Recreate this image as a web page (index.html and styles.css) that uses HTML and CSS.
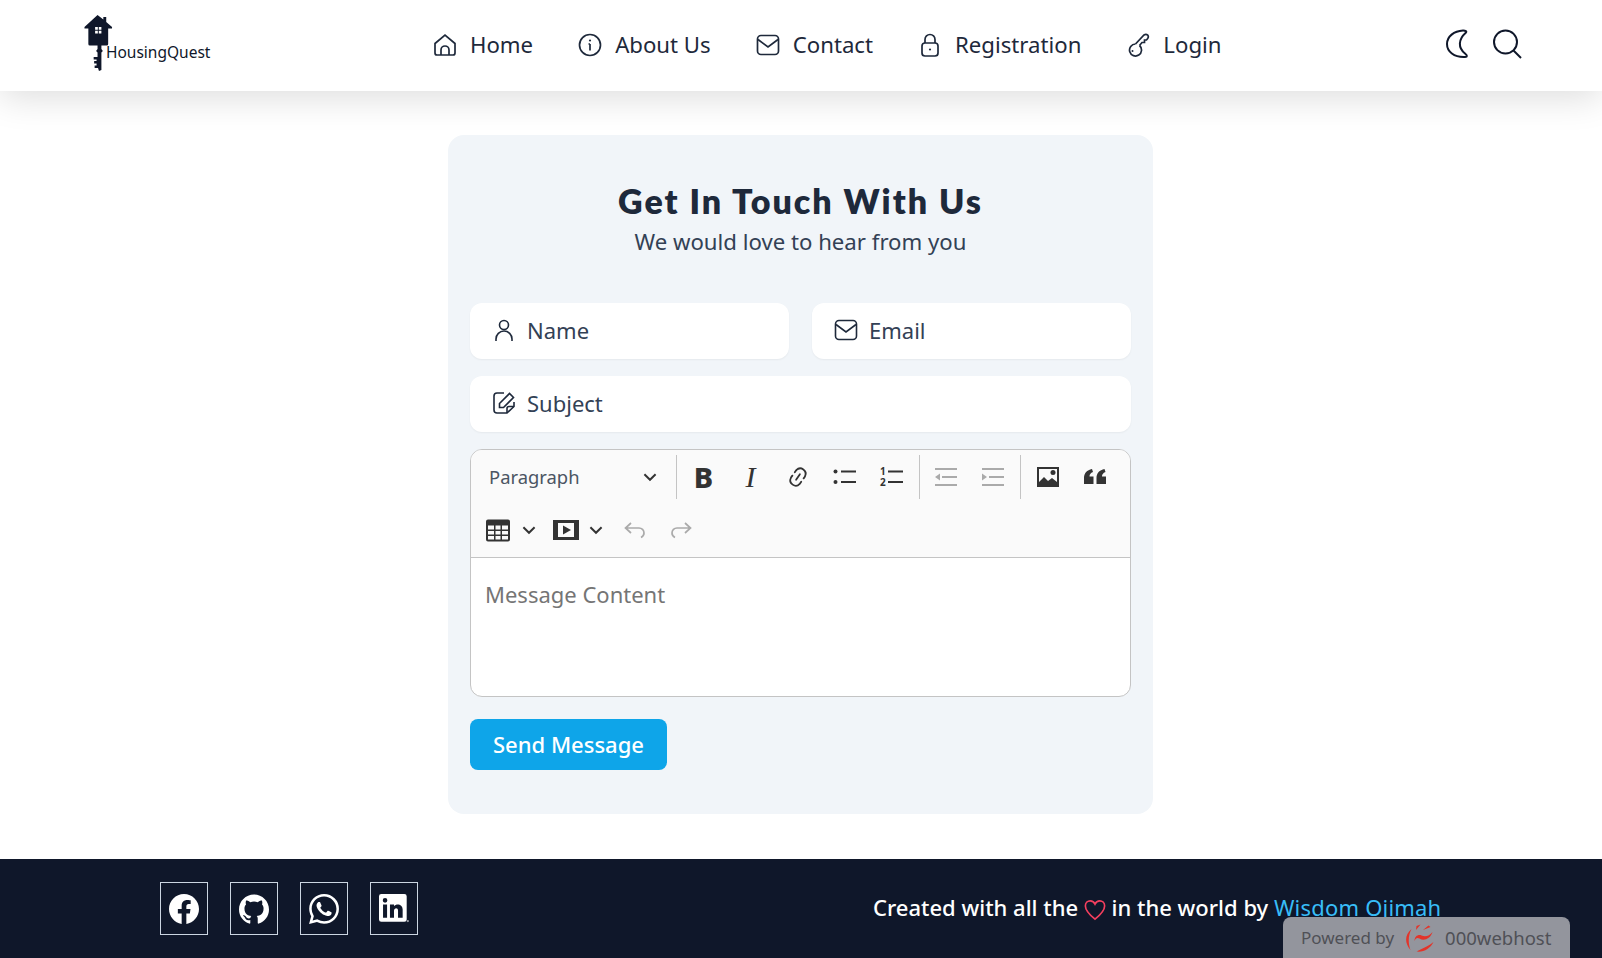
FILE: index.html
```html
<!DOCTYPE html>
<html lang="en">
<head>
    <meta charset="UTF-8">
    <meta name="viewport" content="width=device-width, initial-scale=1.0">
    <title>Contact - HousingQuest</title>
    <link rel="stylesheet" href="styles.css">
</head>
<body>
    <header class="header">
        <a class="logo" href="#">
            <svg class="logo-key" viewBox="0 0 30 56" width="29" height="56" preserveAspectRatio="none">
                <path fill="#0f172a" d="M14 0 L20 4.500 V2 H23 V7 L29 12 V13.500 H25 V29 Q25 30.500 23.500 30.500 H18 V34 L19.500 36 L18 37.500 V55 L15.500 56 L14.500 53 H11 V50.500 H13 V48.500 H10.500 V46 H13 V44.500 H10 V42 H14 V37.500 L12.500 36 L14 34 V30.500 H6 Q4.500 30.500 4.500 29 V13.500 H0.500 V12 Z"/>
                <path fill="#fff" d="M11.500 12 H14.300 V14.800 H11.500 Z M15.300 12 H18 V14.800 H15.300 Z M11.500 15.800 H14.300 V18.500 H11.500 Z M15.300 15.800 H18 V18.500 H15.300 Z"/>
            </svg>
            <span class="logo-text">HousingQuest</span>
        </a>
        <nav class="nav">
            <a href="#" class="nav-link">
                <svg class="icon" viewBox="0 0 24 24"><path d="M2 10.500 L12 2 L22 10.500 V20 Q22 22 20 22 H4 Q2 22 2 20 Z"/><path d="M8 22 V17 A4 4 0 0 1 16 17 V22"/></svg>
                Home
            </a>
            <a href="#" class="nav-link">
                <svg class="icon" viewBox="0 0 24 24"><circle cx="12" cy="12" r="10.500"/><path d="M12 11 V17.500 M10.500 11 H12"/><circle class="dot" cx="12" cy="7.500" r="1.100"/></svg>
                About Us
            </a>
            <a href="#" class="nav-link">
                <svg class="icon" viewBox="0 0 24 24"><rect x="1.500" y="2.500" width="21" height="19" rx="3.500"/><path d="M2 6.500 L12 14 L22 6.500"/></svg>
                Contact
            </a>
            <a href="#" class="nav-link">
                <svg class="icon" viewBox="0 0 24 24"><rect x="4" y="10" width="16" height="13" rx="3"/><path d="M7 10 V6.500 A5 5 0 0 1 17 6.500 V10"/><circle class="dot" cx="12" cy="16.500" r="1.100"/></svg>
                Registration
            </a>
            <a href="#" class="nav-link">
                <svg class="icon" viewBox="0 0 24 24"><path d="M9.500 11 L18 2 Q20 0.800 21.800 2.200 Q23 4 21.500 5.800 L20.500 7 H18.500 V9.500 H16 L13.500 12.500"/><path d="M9.500 11 A6 6 0 1 0 13.500 12.500"/><circle class="dot" cx="6.500" cy="18" r="1"/></svg>
                Login
            </a>
        </nav>
        <div class="header-tools">
            <svg class="tool-icon moon" viewBox="0 0 24 30"><path d="M18 1.500 C9 2 2 7.500 2 15 C2 22.500 9 28.500 20 28 C22.500 27.800 22.500 26.500 20 24.500 C13 19 13 10.500 21 3.500 C22 2.500 20.500 1.400 18 1.500 Z"/></svg>
            <svg class="tool-icon search" viewBox="0 0 30 30"><circle cx="13.500" cy="13" r="11.500"/><path d="M21.500 21.500 L29 29"/></svg>
        </div>
    </header>

    <main class="main">
        <section class="contact-card">
            <h1 class="contact-title">Get In Touch With Us</h1>
            <p class="contact-sub">We would love to hear from you</p>

            <div class="field-row">
                <div class="field">
                    <svg class="field-icon" viewBox="0 0 24 24"><circle cx="12" cy="7" r="4.500"/><path d="M4 23 V21 A8 8 0 0 1 20 21 V23"/></svg>
                    <span>Name</span>
                </div>
                <div class="field">
                    <svg class="field-icon" viewBox="0 0 24 24"><rect x="1.500" y="2.500" width="21" height="19" rx="3.500"/><path d="M2 6.500 L12 14 L22 6.500"/></svg>
                    <span>Email</span>
                </div>
            </div>
            <div class="field">
                <svg class="field-icon" viewBox="0 0 24 24"><path d="M12 2 H5 Q2 2 2 5 V19 Q2 22 5 22 H15 L22 15.500 V11"/><path d="M22 15.500 H17 Q15 15.500 15 17.500 V22"/><path d="M7.500 12.500 L17.500 2.500 L21.500 6.500 L11.500 16.500 H7.500 Z"/></svg>
                <span>Subject</span>
            </div>

            <div class="editor">
                <div class="toolbar">
                    <div class="toolbar-row">
                        <div class="tb-select">
                            <span>Paragraph</span>
                            <svg class="chev" viewBox="0 0 10 10"><path d="M1 3 L5 7 L9 3"/></svg>
                        </div>
                        <span class="tb-sep"></span>
                        <span class="tb-btn tb-bold">B</span>
                        <span class="tb-btn tb-italic">I</span>
                        <span class="tb-btn">
                            <svg class="tb-icon tb-link" viewBox="0 0 20 20"><path d="m11.077 15 .991-1.416a.75.75 0 1 1 1.229.86l-1.148 1.64a.748.748 0 0 1-.217.206 5.251 5.251 0 0 1-8.503-5.955.741.741 0 0 1 .12-.274l1.147-1.639a.75.75 0 1 1 1.228.86L4.933 10.700l.006.003a3.750 3.750 0 0 0 6.132 4.294l.006.004zm5.494-5.335a.748.748 0 0 1-.12.274l-1.147 1.639a.75.75 0 1 1-1.228-.86l.86-1.230a3.750 3.750 0 0 0-6.144-4.301l-.86 1.229a.75.75 0 0 1-1.229-.86l1.148-1.640a.748.748 0 0 1 .217-.206 5.251 5.251 0 0 1 8.503 5.955zm-4.563-2.532a.75.75 0 0 1 .184 1.045l-3.155 4.505a.75.75 0 1 1-1.229-.86l3.155-4.506a.75.75 0 0 1 1.045-.184z"/></svg>
                        </span>
                        <span class="tb-btn">
                            <svg class="tb-icon" viewBox="0 0 24 20"><circle cx="2.500" cy="4.500" r="2"/><circle cx="2.500" cy="15" r="2"/><rect x="8" y="3.500" width="15" height="2"/><rect x="8" y="14" width="15" height="2"/></svg>
                        </span>
                        <span class="tb-btn">
                            <svg class="tb-icon" viewBox="0 0 24 20"><text class="tb-num" x="0" y="8">1</text><text class="tb-num" x="0" y="19">2</text><rect x="8" y="3.500" width="15" height="2"/><rect x="8" y="14" width="15" height="2"/></svg>
                        </span>
                        <span class="tb-sep"></span>
                        <span class="tb-btn tb-off">
                            <svg class="tb-icon" viewBox="0 0 24 20"><rect x="1" y="1" width="22" height="2"/><rect x="8" y="9" width="15" height="2"/><rect x="1" y="17" width="22" height="2"/><path d="M1 10 L6 6.500 V13.500 Z"/></svg>
                        </span>
                        <span class="tb-btn tb-off">
                            <svg class="tb-icon" viewBox="0 0 24 20"><rect x="1" y="1" width="22" height="2"/><rect x="8" y="9" width="15" height="2"/><rect x="1" y="17" width="22" height="2"/><path d="M6 10 L1 6.500 V13.500 Z"/></svg>
                        </span>
                        <span class="tb-sep tb-sep-end"></span>
                        <span class="tb-btn">
                            <svg class="tb-icon" viewBox="0 0 24 20"><path fill-rule="evenodd" d="M1 0 H23 V20 H1 Z M3 2 V15 L8 10 L12 14 L16 11 L21 15 V2 Z"/><circle cx="17" cy="5.500" r="2.500"/></svg>
                        </span>
                        <span class="tb-btn">
                            <svg class="tb-icon" viewBox="0 0 24 20"><path d="M1 17 V11 C1 6 4 3 9 2 L10 5 C7.500 6 6.500 7.500 6.500 9.500 H10.500 V17 Z M13.500 17 V11 C13.500 6 16.500 3 21.500 2 L22.500 5 C20 6 19 7.500 19 9.500 H23 V17 Z"/></svg>
                        </span>
                    </div>
                    <div class="toolbar-row">
                        <span class="tb-drop">
                            <svg class="tb-icon tb-table" viewBox="0 0 24 22"><path fill-rule="evenodd" d="M2 0 H22 Q24 0 24 2 V20 Q24 22 22 22 H2 Q0 22 0 20 V2 Q0 0 2 0 Z M2 6 V10 H8 V6 Z M9.500 6 V10 H14.500 V6 Z M16 6 V10 H22 V6 Z M2 11.500 V15 H8 V11.500 Z M9.500 11.500 V15 H14.500 V11.500 Z M16 11.500 V15 H22 V11.500 Z M2 16.500 V20 H8 V16.500 Z M9.500 16.500 V20 H14.500 V16.500 Z M16 16.500 V20 H22 V16.500 Z"/></svg>
                            <svg class="chev" viewBox="0 0 10 10"><path d="M1 3 L5 7 L9 3"/></svg>
                        </span>
                        <span class="tb-drop tb-drop-media">
                            <svg class="tb-icon tb-media" viewBox="0 0 26 20"><path fill-rule="evenodd" d="M0 0 H26 V20 H0 Z M5 3 V17 H21 V3 Z"/><path d="M10 5.500 L18 10 L10 14.500 Z"/></svg>
                            <svg class="chev" viewBox="0 0 10 10"><path d="M1 3 L5 7 L9 3"/></svg>
                        </span>
                        <span class="tb-btn tb-off tb-undo">
                            <svg class="tb-icon" viewBox="0 0 24 20"><path class="ln" d="M8 3 L2.500 8 L8 13 M2.500 8 H16 A5 5 0 0 1 21 13 C21 15 20 16.500 18 17.500"/></svg>
                        </span>
                        <span class="tb-btn tb-off">
                            <svg class="tb-icon" viewBox="0 0 24 20"><path class="ln" d="M16 3 L21.500 8 L16 13 M21.500 8 H8 A5 5 0 0 0 3 13 C3 15 4 16.500 6 17.500"/></svg>
                        </span>
                    </div>
                </div>
                <div class="editor-body">Message Content</div>
            </div>

            <button class="send-btn">Send Message</button>
        </section>
    </main>

    <footer class="footer">
        <div class="socials">
            <a href="#" class="social">
                <svg viewBox="0 0 24 24" width="30" height="30"><path d="M24 12.070C24 5.400 18.630 0 12 0S0 5.400 0 12.070c0 6.030 4.390 11.020 10.130 11.930v-8.440H7.080v-3.490h3.050V9.410c0-3.030 1.790-4.700 4.530-4.700 1.310 0 2.690.24 2.690.24v2.970h-1.510c-1.490 0-1.960.93-1.960 1.880v2.270h3.330l-.53 3.490h-2.800V24C19.610 23.090 24 18.100 24 12.070z"/></svg>
            </a>
            <a href="#" class="social">
                <svg viewBox="0 0 24 24" width="30" height="30"><path d="M12 .3C5.370.3 0 5.670 0 12.300c0 5.300 3.440 9.800 8.210 11.390.6.110.82-.26.82-.58v-2.230c-3.340.73-4.040-1.420-4.040-1.420-.55-1.390-1.330-1.760-1.330-1.760-1.090-.74.080-.73.080-.73 1.200.08 1.840 1.240 1.840 1.240 1.070 1.830 2.810 1.300 3.500 1 .11-.78.420-1.310.76-1.610-2.670-.3-5.470-1.330-5.470-5.930 0-1.310.47-2.380 1.240-3.220-.14-.3-.54-1.520.1-3.180 0 0 1.010-.32 3.300 1.230a11.500 11.500 0 0 1 6 0c2.280-1.550 3.290-1.230 3.290-1.230.64 1.660.24 2.880.12 3.180.76.840 1.230 1.910 1.230 3.220 0 4.610-2.800 5.630-5.480 5.920.43.370.82 1.100.82 2.220v3.300c0 .32.210.69.820.58C20.570 22.090 24 17.590 24 12.300 24 5.670 18.630.3 12 .3z"/></svg>
            </a>
            <a href="#" class="social">
                <svg viewBox="0 0 24 24" width="30" height="30"><path d="M17.470 14.380c-.3-.15-1.760-.87-2.030-.97-.27-.1-.47-.15-.67.15-.2.3-.77.97-.94 1.160-.17.2-.35.22-.64.08-.3-.15-1.260-.46-2.390-1.480-.88-.79-1.480-1.760-1.650-2.060-.17-.3-.02-.46.13-.61.13-.13.3-.35.45-.52.15-.17.2-.3.3-.5.1-.2.05-.37-.02-.52-.08-.15-.67-1.610-.92-2.210-.24-.58-.49-.5-.67-.51h-.57c-.2 0-.52.07-.79.37-.27.3-1.040 1.020-1.040 2.480s1.060 2.880 1.210 3.070c.15.2 2.100 3.200 5.080 4.490.71.3 1.260.49 1.690.62.71.23 1.360.2 1.870.12.57-.09 1.760-.72 2.010-1.410.25-.7.25-1.290.17-1.410-.07-.13-.27-.2-.57-.35zM12.050 21.790h-.01a9.870 9.870 0 0 1-5.030-1.380l-.36-.21-3.740.98 1-3.650-.24-.37a9.860 9.860 0 0 1-1.510-5.260c0-5.450 4.440-9.880 9.890-9.880 2.640 0 5.120 1.030 6.990 2.900a9.820 9.820 0 0 1 2.890 6.990c0 5.450-4.440 9.880-9.880 9.880zM20.460 3.490A11.820 11.820 0 0 0 12.050 0C5.490 0 .16 5.330.160 11.890c0 2.100.55 4.140 1.590 5.950L.06 24l6.310-1.650a11.880 11.880 0 0 0 5.680 1.450h.01c6.550 0 11.890-5.330 11.890-11.890a11.820 11.820 0 0 0-3.480-8.420z"/></svg>
            </a>
            <a href="#" class="social">
                <svg viewBox="0 0 26 26" width="30" height="30"><path fill-rule="evenodd" d="M2 0 H22 Q24 0 24 2 V22 Q24 24 22 24 H2 Q0 24 0 22 V2 Q0 0 2 0 Z M3.500 9 V20.500 H7 V9 Z M5.250 3.500 A2 2 0 1 0 5.250 7.500 A2 2 0 1 0 5.250 3.500 Z M9.500 9 V20.500 H13 V14.500 C13 12 16.500 11.500 16.500 14.500 V20.500 H20.500 V13.500 C20.500 8.500 15 8 13 10.500 V9 Z"/><circle cx="25" cy="23.500" r="1" opacity=".6"/></svg>
            </a>
        </div>
        <p class="credit">
            Created with all the
            <svg class="heart" viewBox="0 0 24 24"><path d="M12 22 C6 17 1.500 12.500 1.500 7.500 C1.500 4 4 2 6.800 2 C9 2 11 3.300 12 5.500 C13 3.300 15 2 17.200 2 C20 2 22.500 4 22.500 7.500 C22.500 12.500 18 17 12 22 Z"/></svg>
            in the world by <a href="#" class="credit-link">Wisdom Ojimah</a>
        </p>
        <div class="host-badge">
            <span>Powered by</span>
            <svg class="host-logo" viewBox="0 0 32 28" width="33" height="28">
                <path fill="#e3342a" d="M8 5 C1 11 1 19 7 26 C4.500 19 4.500 12 8 5 Z M13 27.500 C20 28.500 27 24.500 30 18 C26 21.500 20 24 13 27.500 Z M11 17 C11 12 15 10 18 11.500 C22 13 26 12 29 8 C27 15 20 17.500 16 14.500 C13.500 13 12 14.500 11 17 Z M19.500 6 L25 1.500 L27 3 Z M13 2 L17 0.500 L12.500 6 Z"/>
            </svg>
            <span class="host-name">000webhost</span>
        </div>
    </footer>
</body>
</html>
```

FILE: styles.css
```css
* {
    box-sizing: border-box;
}
html, body {
    height: 958px;
    margin: 0;
    overflow: hidden;
}
body {
    font-family: "Noto Sans", sans-serif;
    color: #1e293b;
    background-color: #fff;
    position: relative;
}
a {
    color: inherit;
    text-decoration: none;
}

/* header */
.header {
    height: 91px;
    display: flex;
    align-items: center;
    background-color: #fff;
    box-shadow: 0 6px 36px rgba(0, 0, 0, 0.14);
    padding-left: 84px;
    padding-right: 80px;
    position: relative;
}
.logo {
    width: 349px;
    display: flex;
    align-items: flex-end;
    height: 56px;
    margin-top: -6px;
    color: #0f172a;
}
.logo-key {
    flex: none;
}
.logo-text {
    font-size: 15.5px;
    margin-left: -7px;
    margin-bottom: 8px;
}
.nav {
    display: flex;
    gap: 45px;
    font-size: 22.2px;
    margin-top: -2px;
}
.nav-link {
    display: flex;
    align-items: center;
    gap: 13px;
}
.icon {
    width: 24px;
    height: 24px;
    fill: none;
    stroke: #1e293b;
    stroke-width: 1.7;
}
.icon .dot {
    fill: #1e293b;
    stroke: none;
}
.header-tools {
    margin-left: auto;
    display: flex;
    align-items: center;
    gap: 23px;
    margin-top: -4px;
}
.tool-icon {
    fill: none;
    stroke: #0f172a;
    stroke-width: 2;
}
.moon {
    width: 24px;
    height: 30px;
}
.search {
    width: 30px;
    height: 30px;
}

/* contact form */
.main {
    display: flex;
    justify-content: center;
    padding-top: 44px;
    padding-right: 1px;
    height: 768px;
}
.contact-card {
    width: 705px;
    height: 679px;
    background-color: #f1f5f9;
    border-radius: 16px;
    padding: 45px 22px 0;
}
.contact-title {
    margin: 0;
    text-align: center;
    font-family: "Lato", sans-serif;
    font-size: 34px;
    line-height: 42px;
    font-weight: 800;
    letter-spacing: 2px;
    color: #1e293b;
}
.contact-sub {
    margin: 4px 0 0;
    text-align: center;
    font-size: 22.2px;
    line-height: 32px;
    color: #334155;
}
.field-row {
    display: flex;
    gap: 23px;
    margin-top: 45px;
    margin-bottom: 17px;
}
.field {
    flex: 1;
    height: 56px;
    display: flex;
    align-items: center;
    gap: 11px;
    padding-left: 22px;
    padding-bottom: 2px;
    background-color: #fff;
    border-radius: 12px;
    box-shadow: 0 1px 2px rgba(0, 0, 0, 0.05);
    font-size: 22px;
    color: #334155;
}
.field-icon {
    width: 24px;
    height: 24px;
    fill: none;
    stroke: #1e293b;
    stroke-width: 1.6;
}

/* editor */
.editor {
    margin-top: 17px;
    height: 248px;
    border: 1px solid #c4c4c4;
    border-radius: 12px;
    overflow: hidden;
    background-color: #fff;
}
.toolbar {
    height: 108px;
    background-color: #fafafa;
    border-bottom: 1px solid #c4c4c4;
}
.toolbar-row {
    display: flex;
    align-items: center;
    height: 53.5px;
    padding-left: 6px;
}
.tb-select {
    width: 195px;
    display: flex;
    align-items: center;
    justify-content: space-between;
    padding: 0 15px 0 12px;
    font-size: 18.4px;
    color: #4b5563;
}
.chev {
    width: 14px;
    height: 14px;
    fill: none;
    stroke: #333;
    stroke-width: 1.4;
}
.tb-sep {
    width: 1px;
    height: 44px;
    margin: 0 2px 0 4px;
    background-color: #c4c4c4;
    flex: none;
}
.tb-sep-end {
    margin-right: 3px;
}
.tb-btn {
    width: 47px;
    flex: none;
    display: flex;
    align-items: center;
    justify-content: center;
    color: #333;
}
.tb-icon {
    width: 24px;
    height: 20px;
    fill: #333;
    overflow: visible;
}
.tb-icon .ln {
    fill: none;
    stroke: currentColor;
    stroke-width: 1.7;
}
.tb-link {
    height: 24px;
}
.tb-off {
    color: #aaa;
}
.tb-off .tb-icon {
    fill: #aaa;
}
.tb-undo {
    margin-right: -1px;
}
.tb-bold {
    font-size: 29px;
    line-height: 34px;
    font-weight: 800;
    margin-left: 1px;
}
.tb-italic {
    font-family: "Liberation Serif", serif;
    font-style: italic;
    font-size: 30px;
    line-height: 34px;
}
.tb-num {
    font-size: 10px;
    font-weight: 700;
}
.tb-drop {
    width: 68px;
    flex: none;
    display: flex;
    align-items: center;
    gap: 12px;
    padding-left: 9px;
}
.tb-drop-media {
    width: 66px;
    gap: 10px;
    padding-left: 8px;
}
.tb-table {
    width: 24px;
    height: 23px;
}
.tb-media {
    width: 26px;
}
.editor-body {
    padding: 21px 14px;
    font-size: 22px;
    color: #757575;
}
.send-btn {
    display: block;
    margin-top: 22px;
    width: 197px;
    height: 51px;
    padding-bottom: 3px;
    border: none;
    border-radius: 8px;
    background-color: #0ea5e9;
    color: #fff;
    font-family: inherit;
    font-size: 22px;
    font-weight: 500;
    cursor: pointer;
}

/* footer */
.footer {
    height: 99px;
    background-color: #0f172a;
    color: #fff;
    display: flex;
    align-items: flex-start;
    padding: 23px 0 0 160px;
    position: relative;
}
.socials {
    display: flex;
    gap: 22px;
}
.social {
    width: 48px;
    height: 53px;
    border: 1px solid #cbd5e1;
    display: flex;
    align-items: center;
    justify-content: center;
}
.social svg {
    fill: #fff;
}
.credit {
    margin: -1px 0 0 455px;
    font-size: 22px;
    line-height: 53px;
    font-weight: 500;
    white-space: nowrap;
}
.heart {
    width: 22px;
    height: 24px;
    fill: none;
    stroke: #f43f5e;
    stroke-width: 1.8;
    vertical-align: -6px;
}
.credit-link {
    color: #38bdf8;
    font-weight: 400;
    letter-spacing: 0.2px;
}
.host-badge {
    position: absolute;
    left: 1283px;
    bottom: 0;
    width: 287px;
    height: 41px;
    border-radius: 8px 8px 0 0;
    background-color: #93959d;
    color: #4f5056;
    display: flex;
    align-items: center;
    gap: 9px;
    padding-left: 18px;
    font-size: 17px;
}
.host-name {
    font-size: 18.5px;
}
```
